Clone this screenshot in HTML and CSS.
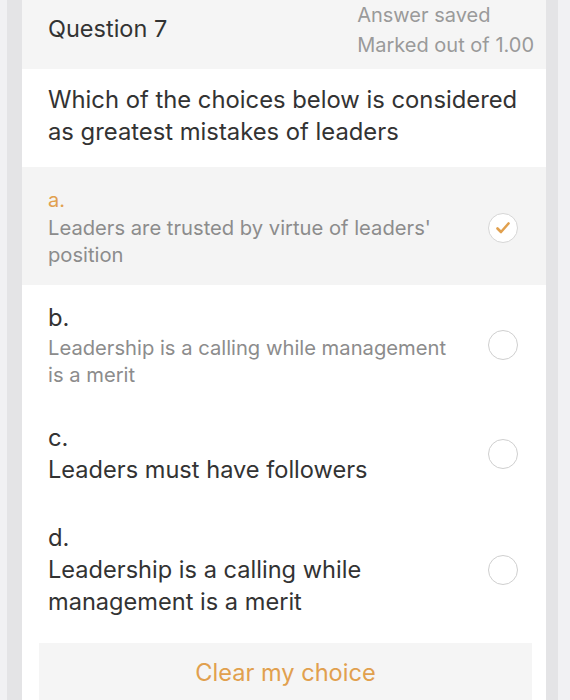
FILE: index.html
```html
<!DOCTYPE html>
<html>
<head>
<meta charset="utf-8">
<link rel="stylesheet" href="styles.css">
</head>
<body>
<div class="frame">
  <div class="panel">
    <div class="header">
      <div class="title">Question 7</div>
      <div class="meta">
        <div>Answer saved</div>
        <div>Marked out of 1.00</div>
      </div>
    </div>
    <div class="question">Which of the choices below is considered as greatest mistakes of leaders</div>

    <div class="option selected">
      <div class="body">
        <div class="label small orange">a.</div>
        <div class="text small">Leaders are trusted by virtue of leaders' position</div>
      </div>
      <div class="radio checked">
        <svg width="30" height="30" viewBox="0 0 30 30"><path d="M9.5 15.5 L13 19 L20.5 10.5" fill="none" stroke="#e1a04e" stroke-width="2.6" stroke-linecap="round" stroke-linejoin="round"/></svg>
      </div>
    </div>

    <div class="option opt-b">
      <div class="body">
        <div class="label big">b.</div>
        <div class="text small">Leadership is a calling while management is a merit</div>
      </div>
      <div class="radio"></div>
    </div>

    <div class="option opt-c">
      <div class="body">
        <div class="label big">c.</div>
        <div class="text big">Leaders must have followers</div>
      </div>
      <div class="radio"></div>
    </div>

    <div class="option opt-d">
      <div class="body">
        <div class="label big">d.</div>
        <div class="text big">Leadership is a calling while management is a merit</div>
      </div>
      <div class="radio"></div>
    </div>

    <div class="clear">Clear my choice</div>
  </div>
</div>
</body>
</html>
```

FILE: styles.css
```css
html, body {
  margin: 0;
  padding: 0;
  height: 100%;
  overflow: hidden;
}
body {
  background: #f1f1f3;
  font-family: Inter, "Liberation Sans", Arial, sans-serif;
  color: #333;
}
.frame {
  margin: 0 12px 0 7px;
  padding: 0 12px 0 15px;
  background: #e4e4e6;
  height: 100%;
}
.panel {
  background: #ffffff;
  height: 100%;
}
.header {
  background: #f5f5f5;
  height: 69px;
  display: flex;
  justify-content: space-between;
  padding: 0 12px 0 26px;
}
.title {
  font-size: 23.5px;
  line-height: 30px;
  padding-top: 14px;
  color: #333;
}
.meta {
  text-align: left;
  font-size: 20px;
  line-height: 30px;
  color: #9a9a9a;
}
.question {
  font-size: 23.8px;
  line-height: 32px;
  padding: 15px 20px 19px 26px;
  color: #333;
}
.option {
  display: flex;
  align-items: center;
  padding: 17px 28px 16px 26px;
}
.option.selected {
  background: #f4f4f4;
  padding-top: 20px;
  padding-bottom: 17px;
}
.body {
  flex: 1;
  padding-right: 30px;
}
.label.small {
  font-size: 20px;
  line-height: 27px;
}
.label.big {
  font-size: 23.8px;
  line-height: 32px;
  color: #333;
}
.orange {
  color: #e1a04e;
}
.text.small {
  font-size: 20.2px;
  line-height: 27px;
  color: #8c8c8c;
}
.text.big {
  font-size: 23.6px;
  line-height: 32px;
  color: #333;
}
.opt-c {
  padding-top: 18px;
}
.opt-d {
  padding-top: 20px;
}
.radio {
  width: 30px;
  height: 30px;
  border: 1.5px solid #cfcfcf;
  border-radius: 50%;
  box-sizing: border-box;
  flex: none;
  display: flex;
  align-items: center;
  justify-content: center;
  background: #fff;
}
.radio svg {
  display: block;
  flex: none;
}
.radio.checked {
  border-color: #d6d6d6;
}
.clear {
  margin: 9px 14px 0 17px;
  background: #f5f5f5;
  height: 80px;
  padding-top: 16px;
  box-sizing: border-box;
  text-align: center;
  font-size: 23.6px;
  line-height: 28px;
  color: #e1a04e;
}
```
